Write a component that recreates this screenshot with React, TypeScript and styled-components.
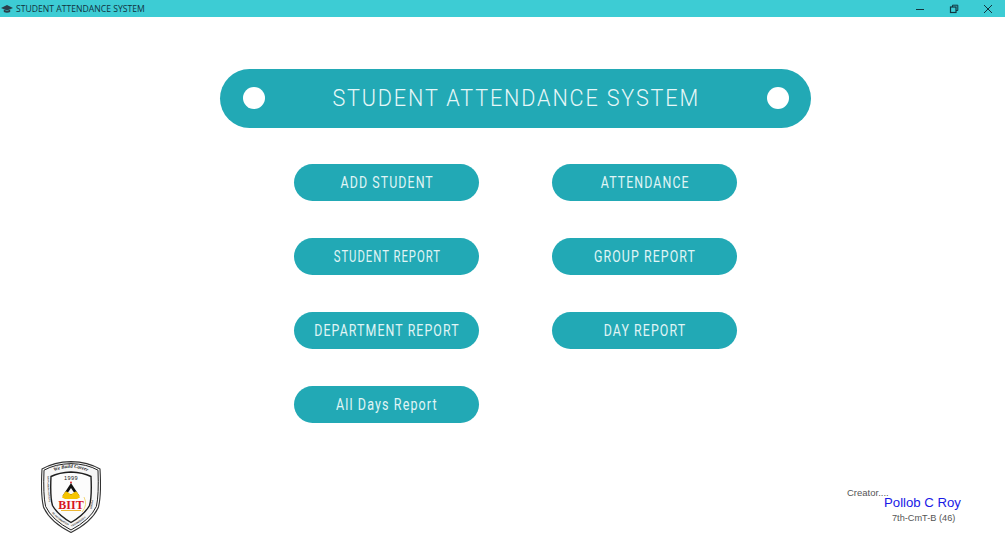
import React from "react";
import styled, { createGlobalStyle } from "styled-components";

const Global = createGlobalStyle`
  html, body { margin: 0; padding: 0; background: #fff; }
  body { font-family: "Liberation Sans", Arial, sans-serif; overflow: hidden; }
`;
const Page = styled.div`
  width: 1005px; height: 544px; display: flex; flex-direction: column; background: #fff; overflow: hidden;
`;
const TitleBar = styled.div`
  height: 17px; background: #3dccd4; display: flex; align-items: center; flex: none;
`;
const AppIcon = styled.svg`
  width: 12px; height: 10px; margin-left: 1px; flex: none;
`;
const TitleText = styled.div`
  margin-left: 3px; font-family: "Open Sans", "Liberation Sans", sans-serif; font-size: 8.65px; color: #12333f;
  white-space: nowrap; flex: 1;
`;
const WinButton = styled.div`
  width: 34px; height: 17px; display: flex; align-items: center; justify-content: center;
  svg { width: 10px; height: 10px; display: block; }
`;
const Main = styled.div`
  padding-top: 51.5px; display: flex; flex-direction: column; align-items: flex-start;
`;
const Hero = styled.div`
  margin-left: 220px; width: 590.5px; height: 59px; border-radius: 29.5px; background: #22a9b5;
  display: flex; align-items: center; justify-content: space-between; padding: 0 21px 0 23px; box-sizing: border-box;
`;
const HeroDot = styled.span`
  width: 22px; height: 22px; border-radius: 50%; background: #fff; flex: none;
`;
const HeroTitle = styled.div`
  font-family: "Roboto", sans-serif; font-weight: 300; font-size: 24px; letter-spacing: 2.05px; color: #e6f7f8; white-space: nowrap;
  transform: scaleX(0.9); margin-top: -1px;
`;
const ButtonGrid = styled.div`
  margin: 36.5px 0 0 294px; display: grid; grid-template-columns: 184.5px 184.5px; column-gap: 73.5px; row-gap: 37px;
`;
const MenuButton = styled.button`
  height: 37px; border: none; border-radius: 18.5px; background: #22a9b5; color: #e0f5f6; padding: 0 0 0 2px;
  display: flex; align-items: center; justify-content: center;
`;
const MenuLabel = styled.span<{ $squeeze: number }>`
  font-family: "Roboto", sans-serif; font-weight: 400; font-size: 16.5px; letter-spacing: 1.45px; white-space: nowrap;
  transform: scaleX(${(p) => p.$squeeze}); display: inline-block;
`;
const Footer = styled.div`
  margin-top: 38px; width: 100%; display: flex; justify-content: space-between; align-items: flex-start;
`;
const Logo = styled.svg`
  margin-left: 41px; width: 60px; height: 72px; flex: none;
`;
const Credit = styled.div`
  margin: 26px 43px 0 0; width: 115px; display: flex; flex-direction: column;
`;
const CreatorLabel = styled.div`
  font-size: 9.5px; line-height: 11px; color: #555;
`;
const CreatorName = styled.div`
  margin: -3px 0 0 37px; font-size: 13.2px; line-height: 16px; color: #1a1ae6; white-space: nowrap;
`;
const CreatorClass = styled.div`
  margin: 2px 0 0 45px; font-size: 9.2px; line-height: 11px; color: #555; white-space: nowrap;
`;

const items = [
  { label: "ADD STUDENT", squeeze: 0.75 },
  { label: "ATTENDANCE", squeeze: 0.75 },
  { label: "STUDENT REPORT", squeeze: 0.685 },
  { label: "GROUP REPORT", squeeze: 0.75 },
  { label: "DEPARTMENT REPORT", squeeze: 0.75 },
  { label: "DAY REPORT", squeeze: 0.75 },
  { label: "All Days Report", squeeze: 0.76 },
];

export default function App() {
  return (
    <Page>
      <Global />
      <TitleBar>
        <AppIcon viewBox="0 0 12 10">
          <path d="M6 1 L12 4 L6 6.5 L0 4 Z" fill="#2a3f4a" />
          <path d="M2.8 5.6 V8 Q6 9.6 9.2 8 V5.6 L6 7 Z" fill="#2a3f4a" />
        </AppIcon>
        <TitleText>STUDENT ATTENDANCE SYSTEM</TitleText>
        <WinButton>
          <svg viewBox="0 0 10 10"><path d="M1 5.5 H9" stroke="#12343e" strokeWidth="1" fill="none" /></svg>
        </WinButton>
        <WinButton>
          <svg viewBox="0 0 10 10">
            <rect x="1.5" y="3" width="5.5" height="5.5" fill="none" stroke="#12343e" strokeWidth="1.2" />
            <path d="M3.5 3 V1.2 H8.8 V6.5 H7" fill="none" stroke="#12343e" strokeWidth="1" />
          </svg>
        </WinButton>
        <WinButton>
          <svg viewBox="0 0 10 10"><path d="M1 1 L9 9 M9 1 L1 9" stroke="#12343e" strokeWidth="1" fill="none" /></svg>
        </WinButton>
      </TitleBar>
      <Main>
        <Hero>
          <HeroDot />
          <HeroTitle>STUDENT ATTENDANCE SYSTEM</HeroTitle>
          <HeroDot />
        </Hero>
        <ButtonGrid>
          {items.map((t) => (
            <MenuButton key={t.label}><MenuLabel $squeeze={t.squeeze}>{t.label}</MenuLabel></MenuButton>
          ))}
        </ButtonGrid>
        <Footer>
          <Logo viewBox="0 0 60 72">
            <defs>
              <path id="ringTop" d="M12 11 Q30 2.5 48 11" />
              <path id="ringLeft" d="M6.6 15 Q6 32 9.2 48" />
              <path id="ringLow" d="M11 52 Q17 59.5 30 65.8" />
              <path id="ringLowR" d="M30.5 65.8 Q43 59.5 49 52" />
              <path id="ringRight" d="M50.8 48 Q54 32 53.4 15" />
            </defs>
            <path d="M30 0.6 Q47 1 59 8 Q60.5 34 57.5 46 Q51 61 30 71.4 Q9 61 2.5 46 Q-0.5 34 1 8 Q13 1 30 0.6 Z" fill="#fff" stroke="#333" strokeWidth="1.1" />
            <path d="M30 2.6 Q46 3 57 9.2 Q58 34 55.4 45.4 Q49 59 30 69 Q11 59 4.6 45.4 Q2 34 3 9.2 Q14 3 30 2.6 Z" fill="#f6f6f6" stroke="#222" strokeWidth="1" />
            <path d="M30 11 Q42 11.5 50 15.5 Q51 36 48.5 44.5 Q43 54 30 61.5 Q17 54 11.5 44.5 Q9 36 10 15.5 Q18 11.5 30 11 Z" fill="#fcfcfc" stroke="#1e1e1e" strokeWidth="1.4" />
            <text fontFamily="Liberation Serif, serif" fontStyle="italic" fontWeight="bold" fontSize="5" fill="#222">
              <textPath href="#ringTop" startOffset="50%" textAnchor="middle">We Build Career</textPath>
            </text>
            <text fontFamily="Liberation Sans, sans-serif" fontWeight="bold" fontSize="2.1" fill="#333">
              <textPath href="#ringLeft">BANGLADESH INSTITUTE</textPath>
            </text>
            <text fontFamily="Liberation Sans, sans-serif" fontWeight="bold" fontSize="2.4" fill="#333">
              <textPath href="#ringLow">OF INFORMATION</textPath>
            </text>
            <text fontFamily="Liberation Sans, sans-serif" fontWeight="bold" fontSize="2.4" fill="#333">
              <textPath href="#ringLowR">TECHNOLOGY</textPath>
            </text>
            <text fontFamily="Liberation Sans, sans-serif" fontWeight="bold" fontSize="2.4" fill="#333">
              <textPath href="#ringRight">BOGRA</textPath>
            </text>
            <text x="30" y="19" textAnchor="middle" fontFamily="Liberation Sans, sans-serif" fontSize="5.6" letterSpacing="0.4" fill="#222">1999</text>
            <circle cx="30" cy="21.5" r="0.9" fill="#d8141c" />
            <path d="M30 22 L38.5 35 H21.5 Z" fill="#111" />
            <path d="M30 27 L34 33 H26 Z" fill="#f7f7f7" />
            <path d="M21 36.5 Q24 29 26.5 31 L30 33.5 L33.5 31 Q36 29 39 36.5 L36 38 H24 Z" fill="#f5c400" />
            <path d="M43 36 Q47 44 41 51" stroke="#f3d878" strokeWidth="1" fill="none" />
            <text x="30" y="47.5" textAnchor="middle" fontFamily="Liberation Serif, serif" fontWeight="bold" fontSize="12" fill="#d8141c">BIIT</text>
            <path d="M20 49.5 H40" stroke="#e9a400" strokeWidth="0.8" />
          </Logo>
          <Credit>
            <CreatorLabel>Creator....</CreatorLabel>
            <CreatorName>Pollob C Roy</CreatorName>
            <CreatorClass>7th-CmT-B (46)</CreatorClass>
          </Credit>
        </Footer>
      </Main>
    </Page>
  );
}
